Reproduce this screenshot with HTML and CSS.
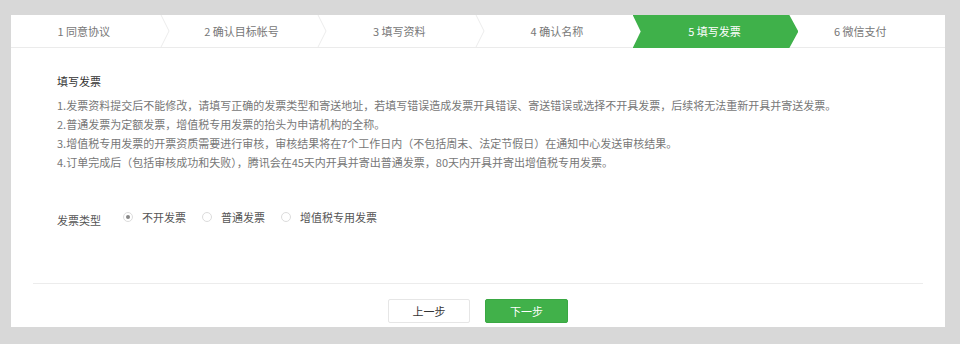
FILE: index.html
```html
<!DOCTYPE html>
<html lang="zh-CN">
<head>
<meta charset="utf-8">
<title>填写发票</title>
<link rel="stylesheet" href="styles.css">
</head>
<body>
<div class="panel">
  <div class="steps">
    <div class="step"><span>1 同意协议</span><svg class="chev" width="10" height="32" viewBox="0 0 10 32"><polyline points="1,0 9,16 1,32" fill="none" stroke="#ececec" stroke-width="1"/></svg></div>
    <div class="step"><span>2 确认目标帐号</span><svg class="chev" width="10" height="32" viewBox="0 0 10 32"><polyline points="1,0 9,16 1,32" fill="none" stroke="#ececec" stroke-width="1"/></svg></div>
    <div class="step"><span>3 填写资料</span><svg class="chev" width="10" height="32" viewBox="0 0 10 32"><polyline points="1,0 9,16 1,32" fill="none" stroke="#ececec" stroke-width="1"/></svg></div>
    <div class="step"><span>4 确认名称</span></div>
    <div class="step active"><span>5 填写发票</span></div>
    <div class="step"><span>6 微信支付</span></div>
  </div>
  <div class="content">
    <h2 class="title">填写发票</h2>
    <ol class="notes">
      <li>1.发票资料提交后不能修改，请填写正确的发票类型和寄送地址，若填写错误造成发票开具错误、寄送错误或选择不开具发票，后续将无法重新开具并寄送发票。</li>
      <li>2.普通发票为定额发票，增值税专用发票的抬头为申请机构的全称。</li>
      <li>3.增值税专用发票的开票资质需要进行审核，审核结果将在7个工作日内（不包括周末、法定节假日）在通知中心发送审核结果。</li>
      <li>4.订单完成后（包括审核成功和失败），腾讯会在45天内开具并寄出普通发票，80天内开具并寄出增值税专用发票。</li>
    </ol>
    <div class="type-row">
      <span class="type-label">发票类型</span>
      <label class="radio checked"><i class="dot"></i>不开发票</label>
      <label class="radio"><i class="dot"></i>普通发票</label>
      <label class="radio"><i class="dot"></i>增值税专用发票</label>
    </div>
  </div>
  <div class="divider"></div>
  <div class="actions">
    <button class="btn btn-prev">上一步</button>
    <button class="btn btn-next">下一步</button>
  </div>
</div>
</body>
</html>
```

FILE: styles.css
```css
* { box-sizing: border-box; }
html, body { margin: 0; padding: 0; }
body {
  background: #d8d8d8;
  font-family: "Noto Sans CJK SC", "Noto Sans", sans-serif;
  font-size: 11px;
  color: #666;
  padding: 15px 0 0 11px;
  height: 344px;
  overflow: hidden;
}
.panel {
  width: 934px;
  height: 312px;
  background: #fff;
  display: flex;
  flex-direction: column;
}
.steps {
  display: flex;
  height: 33px;
  border-bottom: 1px solid #ebebeb;
}
.step {
  flex: 1;
  position: relative;
  display: flex;
  align-items: center;
  justify-content: center;
  padding-right: 12px;
  color: #777;
  font-size: 11px;
}
.step span { position: relative; z-index: 2; }
.chev {
  position: absolute;
  right: -1px;
  top: 0;
}
.step.active { padding-right: 0; color: #fff; }
.step.active::before {
  content: "";
  position: absolute;
  left: -9px;
  right: -11px;
  top: 0;
  bottom: -1px;
  background: #3fb14a;
  clip-path: polygon(0 0, calc(100% - 9px) 0, 100% 50%, calc(100% - 9px) 100%, 0 100%, 8px 50%);
  z-index: 1;
}
.content {
  padding: 24px 0 0 46px;
}
.title {
  margin: 0 0 5px;
  font-size: 11px;
  font-weight: normal;
  color: #333;
  line-height: 19px;
}
.notes {
  list-style: none;
  margin: 0;
  padding: 0;
  line-height: 19px;
  color: #777;
}
.type-row {
  display: flex;
  align-items: center;
  height: 20px;
  margin-top: 35px;
}
.type-label {
  color: #555;
  width: 66px;
  padding-top: 5px;
}
.radio {
  display: flex;
  align-items: center;
  color: #555;
  margin-right: 16px;
}
.dot {
  width: 10px;
  height: 10px;
  border: 1px solid #dcdcdc;
  border-radius: 50%;
  margin-right: 9px;
  display: flex;
  align-items: center;
  justify-content: center;
}
.radio.checked .dot::after {
  content: "";
  width: 4px;
  height: 4px;
  border-radius: 50%;
  background: #888;
}
.divider {
  margin: 56px 22px 0;
  height: 1px;
  background: #ececec;
}
.actions {
  display: flex;
  justify-content: center;
  gap: 15px;
  margin-top: 15px;
}
.btn {
  width: 82px;
  height: 24px;
  font-family: inherit;
  font-size: 11px;
  border-radius: 2px;
  padding: 0;
  cursor: pointer;
}
.btn-prev {
  background: #fff;
  border: 1px solid #e6e6e6;
  color: #333;
}
.btn-next {
  width: 83px;
  background: #41b14a;
  border: 1px solid #3aa843;
  color: #fff;
}
```
